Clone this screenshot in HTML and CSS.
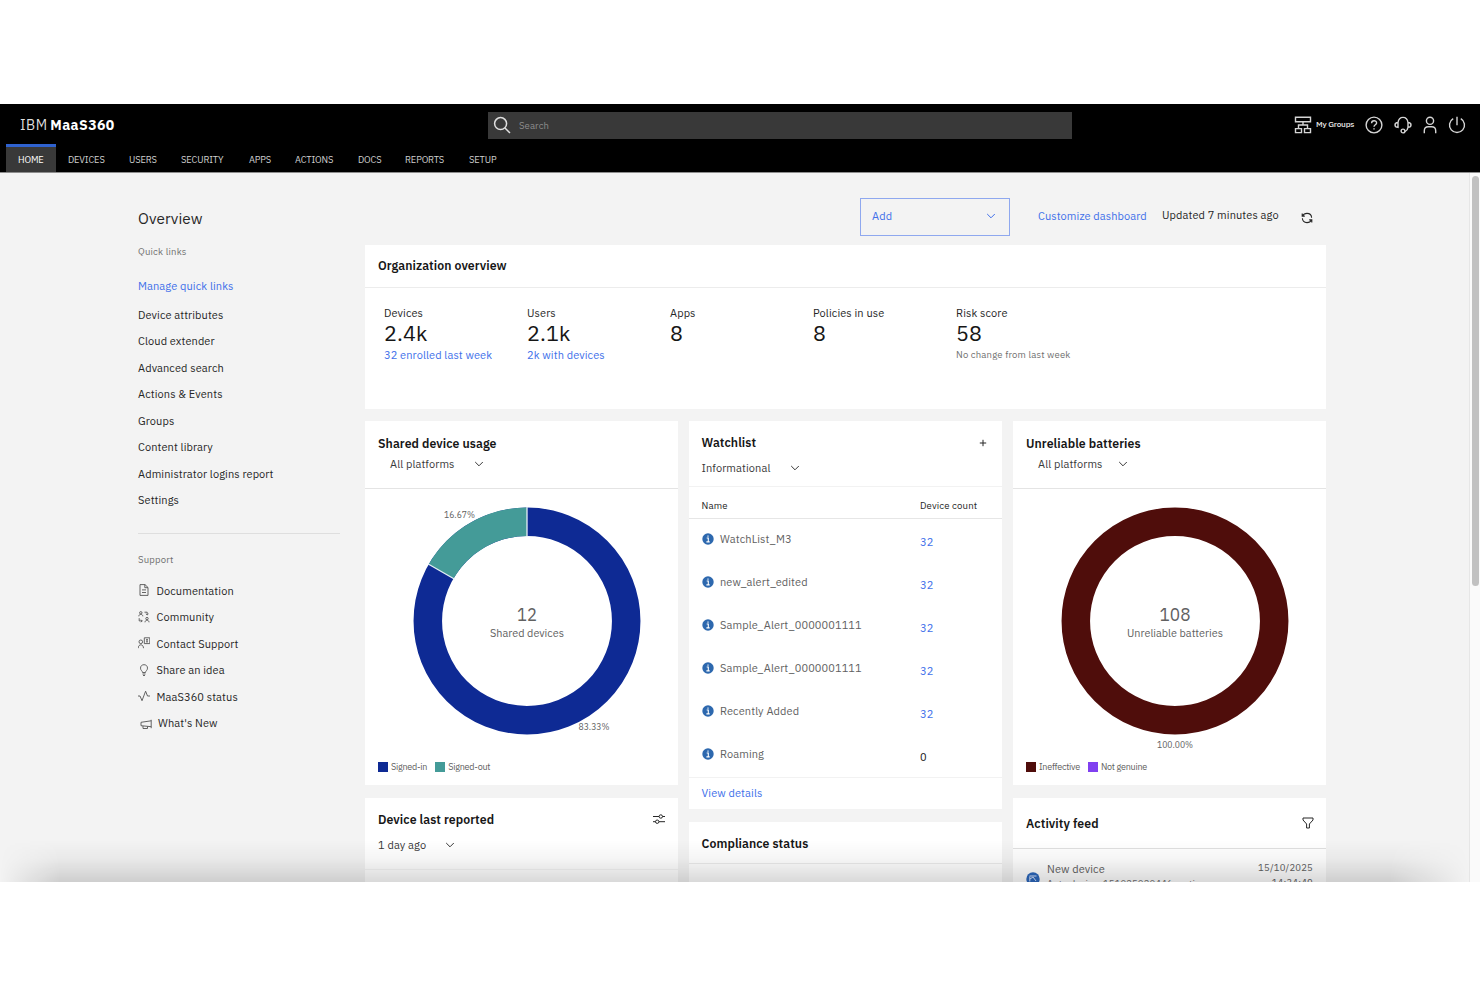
FILE: index.html
```html
<!DOCTYPE html>
<html lang="en">
<head>
<meta charset="utf-8">
<title>IBM MaaS360</title>
<link rel="stylesheet" href="styles.css">
</head>
<body>
<div class="app">
  <header class="header">
    <div class="topbar">
      <div class="brand">IBM <b>MaaS360</b></div>
      <div class="search">
        <svg class="search-icon" viewBox="0 0 18 18"><circle cx="7.6" cy="7.6" r="6"/><path d="M12 12l5 5"/></svg>
        <span>Search</span>
      </div>
      <div class="tools">
        <svg class="tool groups" viewBox="0 0 18 18"><path d="M1.500 1.200h15v4.600h-15zM1.500 12.600h6v4h-6zM10.500 12.600h6v4h-6zM9 5.800v3.200M4.500 12.600V9h9v3.600"/></svg>
        <span class="my-groups">My Groups</span>
        <svg class="tool help" viewBox="0 0 18 18"><circle cx="9" cy="9" r="7.900"/><path d="M6.600 7.200c0-3.400 5-3.200 5-.3 0 1.900-2.600 1.800-2.600 3.800"/><path d="M9 12.300v1.300"/></svg>
        <svg class="tool headset" viewBox="0 0 18 18"><path d="M4 6.500C4.500 3 6.500 1.400 9 1.400s4.500 1.600 5 5.100v4.800c-.3 2.200-1.500 3.600-3 4.200M4 6.500C2 6.600 1 7.500 1 9s1 2.300 3 2.400zM14 6.500c2 .1 3 1 3 2.500s-1 2.300-3 2.400"/><circle cx="9" cy="15" r="1.900"/></svg>
        <svg class="tool user" viewBox="0 0 18 18"><circle cx="9" cy="4.800" r="3.600"/><path d="M3.300 17.300v-2.500c0-2.600 1.600-4 4-4h3.400c2.400 0 4 1.400 4 4v2.500"/></svg>
        <svg class="tool power" viewBox="0 0 18 18"><path d="M9 .8v8.500M12.800 2.600a7.500 7.500 0 1 1-7.600 0"/></svg>
      </div>
    </div>
    <nav class="tabs">
      <a class="tab active">HOME</a><a class="tab">DEVICES</a><a class="tab">USERS</a><a class="tab">SECURITY</a><a class="tab">APPS</a><a class="tab">ACTIONS</a><a class="tab">DOCS</a><a class="tab">REPORTS</a><a class="tab">SETUP</a>
    </nav>
  </header>
  <div class="body">
    <aside class="sidebar">
      <h1 class="title">Overview</h1>
      <div class="section quick">Quick links</div>
      <a class="manage">Manage quick links</a>
      <ul class="links">
        <li>Device attributes</li><li>Cloud extender</li><li>Advanced search</li><li>Actions &amp; Events</li><li>Groups</li><li>Content library</li><li>Administrator logins report</li><li>Settings</li>
      </ul>
      <hr class="divider">
      <div class="section support">Support</div>
      <ul class="links icons">
        <li><svg viewBox="0 0 12 12"><path d="M2 .6h5L10 3.500v7.900H2zM6.800.6v3.100H10M4 5.900h4M4 8.500h4"/></svg>Documentation</li>
        <li><svg viewBox="0 0 12 12"><circle cx="2.800" cy="1.800" r="1.200"/><path d="M.8 5.300c0-2.600 4-2.600 4 0M6.500 1.200h2.700v2.500M8 2.800l1.200 1.200L10.500 2.800M1.200 7.200v2.700h3M3 8.700l1.200 1.200L3 11.200"/><circle cx="9" cy="7.600" r="1.200"/><path d="M7 11.300c0-2.700 4-2.700 4 0"/></svg>Community</li>
        <li><svg viewBox="0 0 12 12"><circle cx="2.800" cy="4.800" r="1.800"/><path d="M.2 11.200c0-4.500 5.300-4.500 5.300 0M6.300.8h5.500v5.800H6.300zM8 2.700h2M9 2.700v2M8 4.900h2"/></svg>Contact Support</li>
        <li><svg viewBox="0 0 12 12"><path d="M4.500 8.500c0-1.700-2-2-2-4.400C2.500 2 4 .7 6 .7s3.500 1.300 3.500 3.400c0 2.400-2 2.700-2 4.400zM4.500 10h3M5 11.500h2"/></svg>Share an idea</li>
        <li><svg viewBox="0 0 12 12"><path d="M0 6h2l2 4.700L7.600 1.200 9.500 6H12"/></svg>MaaS360 status</li>
        <li class="news"><svg viewBox="0 0 12 12"><path d="M11.200 1.800v8.400M11.200 2.800L1 4.300v3.400l10.200 1M3 8v2.500h4.500V8.500"/></svg>What's New</li>
      </ul>
    </aside>
    <main class="main">
      <div class="actions">
        <div class="add"><span>Add</span><svg class="chev" viewBox="0 0 10 10"><path d="M1.200 3l3.800 3.800L8.800 3"/></svg></div>
        <a class="customize">Customize dashboard</a>
        <span class="updated">Updated 7 minutes ago</span>
        <svg class="refresh" viewBox="0 0 12 12"><path d="M1.200 1.500v2.600h2.600M1.500 4C2.400 2.300 4 1.400 6 1.400c2.600 0 4.500 1.900 4.600 4.300M10.800 10.500V7.900H8.200M10.500 8C9.600 9.700 8 10.600 6 10.600 3.400 10.600 1.500 8.700 1.400 6.300"/></svg>
      </div>
      <section class="card org">
        <h2 class="org-head">Organization overview</h2>
        <div class="metrics">
          <div class="metric"><span>Devices</span><strong>2.4k</strong><a>32 enrolled last week</a></div>
          <div class="metric"><span>Users</span><strong>2.1k</strong><a>2k with devices</a></div>
          <div class="metric"><span>Apps</span><strong>8</strong></div>
          <div class="metric"><span>Policies in use</span><strong>8</strong></div>
          <div class="metric"><span>Risk score</span><strong>58</strong><small>No change from last week</small></div>
        </div>
      </section>
      <div class="columns">
        <div class="column">
          <section class="card chart-card">
            <div class="chart-head"><h2>Shared device usage</h2>
              <div class="select">All platforms<svg class="chev" viewBox="0 0 10 10"><path d="M1.200 3l3.800 3.800L8.800 3"/></svg></div></div>
            <svg class="donut" viewBox="0 0 313 260">
              <circle class="ring signed-in" cx="162" cy="132" r="99.200"/>
              <path class="ring signed-out" d="M76.100 82.400A99.200 99.200 0 0 1 162 32.800"/>
              <path class="split" d="M162 18v30M63.200 75l26.500 15.300"/>
              <text class="total" x="162" y="132.300" textLength="20" lengthAdjust="spacingAndGlyphs">12</text>
              <text class="total-label" x="162" y="148" textLength="74" lengthAdjust="spacingAndGlyphs">Shared devices</text>
              <text class="share" x="94.500" y="29.300" textLength="31" lengthAdjust="spacingAndGlyphs">16.67%</text>
              <text class="share" x="229" y="241.300" textLength="31" lengthAdjust="spacingAndGlyphs">83.33%</text>
            </svg>
            <div class="legend"><i class="signed-in"></i><span>Signed-in</span><i class="signed-out"></i><span>Signed-out</span></div>
          </section>
          <section class="card reported">
            <div class="row"><h2>Device last reported</h2>
              <svg class="sliders" viewBox="0 0 12 12"><path d="M0 3.500h6M9.500 3.500H12M0 8.700h2.500M6 8.700h6"/><circle cx="7.800" cy="3.500" r="1.700"/><circle cx="4.200" cy="8.700" r="1.700"/></svg></div>
            <div class="select">1 day ago<svg class="chev" viewBox="0 0 10 10"><path d="M1.200 3l3.800 3.800L8.800 3"/></svg></div>
            <hr>
          </section>
        </div>
        <div class="column">
          <section class="card watch">
            <div class="watch-head">
              <div class="row"><h2>Watchlist</h2><svg class="plus" viewBox="0 0 8 8"><path d="M4 .8v6.400M.8 4h6.400"/></svg></div>
              <div class="select">Informational<svg class="chev" viewBox="0 0 10 10"><path d="M1.200 3l3.800 3.800L8.800 3"/></svg></div>
            </div>
            <div class="watch-cols"><span>Name</span><span>Device count</span></div>
            <div class="watch-rows">
              <div class="watch-row"><svg viewBox="0 0 12 12"><circle cx="6" cy="6" r="5.700"/><path d="M4.700 5h1.600v3.700M4.400 8.900h3.300M6 2.500v1.300"/></svg><span>WatchList_M3</span><a>32</a></div>
              <div class="watch-row"><svg viewBox="0 0 12 12"><circle cx="6" cy="6" r="5.700"/><path d="M4.700 5h1.600v3.700M4.400 8.900h3.300M6 2.500v1.300"/></svg><span>new_alert_edited</span><a>32</a></div>
              <div class="watch-row"><svg viewBox="0 0 12 12"><circle cx="6" cy="6" r="5.700"/><path d="M4.700 5h1.600v3.700M4.400 8.900h3.300M6 2.500v1.300"/></svg><span>Sample_Alert_0000001111</span><a>32</a></div>
              <div class="watch-row"><svg viewBox="0 0 12 12"><circle cx="6" cy="6" r="5.700"/><path d="M4.700 5h1.600v3.700M4.400 8.900h3.300M6 2.500v1.300"/></svg><span>Sample_Alert_0000001111</span><a>32</a></div>
              <div class="watch-row"><svg viewBox="0 0 12 12"><circle cx="6" cy="6" r="5.700"/><path d="M4.700 5h1.600v3.700M4.400 8.900h3.300M6 2.500v1.300"/></svg><span>Recently Added</span><a>32</a></div>
              <div class="watch-row"><svg viewBox="0 0 12 12"><circle cx="6" cy="6" r="5.700"/><path d="M4.700 5h1.600v3.700M4.400 8.900h3.300M6 2.500v1.300"/></svg><span>Roaming</span><b>0</b></div>
            </div>
            <a class="view">View details</a>
          </section>
          <section class="card compliance"><h2>Compliance status</h2><hr></section>
        </div>
        <div class="column">
          <section class="card chart-card batteries">
            <div class="chart-head"><h2>Unreliable batteries</h2>
              <div class="select">All platforms<svg class="chev" viewBox="0 0 10 10"><path d="M1.200 3l3.800 3.800L8.800 3"/></svg></div></div>
            <svg class="donut" viewBox="0 0 313 260">
              <circle class="ring ineffective" cx="162" cy="132" r="99.200"/>
              <text class="total" x="162" y="132.300" textLength="31" lengthAdjust="spacingAndGlyphs">108</text>
              <text class="total-label" x="162" y="148" textLength="96" lengthAdjust="spacingAndGlyphs">Unreliable batteries</text>
              <text class="share" x="162" y="258.800" textLength="36" lengthAdjust="spacingAndGlyphs">100.00%</text>
            </svg>
            <div class="legend"><i class="ineffective"></i><span>Ineffective</span><i class="not-genuine"></i><span>Not genuine</span></div>
          </section>
          <section class="card feed">
            <div class="feed-head"><h2>Activity feed</h2><svg class="filter" viewBox="0 0 12 12"><path d="M1 1h10v2L7.400 7v4H4.600V7L1 3z"/></svg></div>
            <div class="feed-item">
              <svg class="feed-icon" viewBox="0 0 14 14"><circle cx="7" cy="7" r="6.700"/><path d="M3.500 4h7M4 7l3-2 3 4M3.800 4.500v5"/></svg>
              <div class="feed-text"><span>New device</span><small>Auto device_151025020446_notice</small></div>
              <div class="feed-time"><span>15/10/2025</span><span>14:34:49</span></div>
            </div>
          </section>
        </div>
      </div>
    </main>
    <div class="scrollbar"><div class="thumb"></div></div>
  </div>
  <div class="shade"></div>
</div>
</body>
</html>
```
FILE: styles.css
```css
* { box-sizing: border-box; }
body { margin: 0; padding-top: 104px; height: 987px; background: #fff; overflow: hidden; font-family: "IBM Plex Sans", "Noto Sans", sans-serif; font-size: 11px; letter-spacing: .1px; color: #262626; }
h1, h2, ul { margin: 0; padding: 0; }
ul { list-style: none; }
hr { margin: 0; border: 0; height: 1px; background: #ececec; }
svg { fill: none; stroke: currentColor; display: block; flex: none; }
a { color: #4170ea; }
h2 { font-size: 12.300px; font-weight: 600; line-height: 16px; letter-spacing: .07px; color: #161616; white-space: nowrap; }

.app { position: relative; height: 778px; overflow: hidden; background: #f3f3f3; }
.header { height: 69px; background: #000; border-bottom: 1px solid #8d8d8d; color: #e8e8e8; }
.topbar { height: 40px; display: flex; align-items: center; padding: 2px 14px 0 20px; }
.brand { width: 468px; font-size: 14px; color: #ddd; letter-spacing: .45px; word-spacing: -1px; }
.brand b { color: #fff; font-weight: 700; }
.search { width: 584px; height: 27px; background: #393939; display: flex; align-items: center; padding-left: 5px; gap: 8px; font-size: 9.500px; color: #8d8d8d; }
.search-icon { width: 18px; height: 18px; stroke: #e0e0e0; stroke-width: 1.500; }
.tools { flex: 1; display: flex; align-items: center; justify-content: flex-end; }
.tool { width: 18px; height: 18px; stroke: #d5d5d5; stroke-width: 1.400; }
.my-groups { width: 38px; margin: 0 11px 2px 4px; font-size: 8.200px; font-weight: 500; letter-spacing: -.2px; white-space: nowrap; }
.headset { margin-left: 11px; }
.user { margin-left: 9px; }
.power { margin-left: 9px; }
.tabs { display: grid; grid-template-columns: 50px 61px 52px 68px 46px 63px 47px 64px 60px; height: 28px; padding-left: 6px; }
.tab { height: 28px; color: #d0d0d0; font-size: 9.300px; line-height: 32px; padding-left: 12px; letter-spacing: -.12px; }
.tab.active { color: #fff; background: #393939; border-top: 3px solid #2f62cf; line-height: 26px; }

.body { display: flex; height: 709px; }
.sidebar { width: 340px; padding: 34px 0 0 138px; }
.title { font-size: 15.300px; font-weight: 400; line-height: 22px; color: #262626; }
.section { font-size: 9.500px; line-height: 14px; letter-spacing: .2px; color: #6f6f6f; }
.quick { margin-top: 16px; }
.manage { display: block; margin-top: 19px; line-height: 16px; }
.links { margin-top: 7.800px; }
.links li { height: 26.500px; line-height: 26.500px; display: flex; align-items: center; white-space: nowrap; }
.divider { margin-top: 19px; background: #dedede; }
.support { margin-top: 19px; }
.icons { margin-top: 11px; }
.icons svg { width: 12px; height: 12px; margin-right: 6.500px; stroke: #525252; stroke-width: .9; position: relative; top: -1px; }
.icons .news svg { margin: 0 6.500px 0 1.500px; top: 0; }

.main { width: 960.500px; margin-left: 25px; padding-top: 25px; }
.actions { height: 47px; display: flex; align-items: flex-start; }
.add { margin-left: 495px; width: 150px; height: 38px; border: 1px solid #8fa8ef; display: flex; align-items: center; justify-content: space-between; padding: 0 13px 2px 11px; color: #4170ea; }
.chev { width: 10px; height: 10px; stroke-width: 1; }
.customize { margin-left: 28px; width: 124px; line-height: 36px; white-space: nowrap; }
.updated { width: 138.500px; line-height: 35px; white-space: nowrap; }
.refresh { width: 12px; height: 12px; margin-top: 14px; stroke-width: 1.100; }

.card { background: #fff; overflow: hidden; }
.org { height: 164px; }
.org-head { height: 43px; line-height: 41px; padding-left: 13px; border-bottom: 1px solid #ececec; }
.metrics { display: grid; grid-template-columns: repeat(5, 143px); padding: 17px 0 0 19px; }
.metric { display: flex; flex-direction: column; line-height: 16px; white-space: nowrap; }
.metric strong { font-size: 21.500px; font-weight: 400; line-height: 25.500px; color: #161616; }
.metric small { font-size: 9.500px; line-height: 15px; letter-spacing: .18px; color: #6f6f6f; }
.columns { display: grid; grid-template-columns: repeat(3, 1fr); column-gap: 11.500px; margin-top: 12px; }
.column { display: flex; flex-direction: column; gap: 13px; min-width: 0; }
.row { display: flex; align-items: center; justify-content: space-between; }
.select { display: flex; align-items: center; line-height: 16px; color: #393939; white-space: nowrap; }

.chart-card { height: 364px; }
.chart-head { height: 68px; border-bottom: 1px solid #e4e4e4; padding: 13.500px 0 0 13px; }
.chart-head .select { padding: 5px 0 0 12px; }
.select .chev { margin-left: 19px; }
.batteries .select .chev { margin-left: 15px; }
.donut { width: 313px; height: 260px; overflow: visible; }
.ring { stroke-width: 28.500; }
.ring.signed-in { stroke: #0e2a94; }
.ring.signed-out { stroke: #449b98; }
.ring.ineffective { stroke: #4f0d0b; }
.split { stroke: #e5f0f5; stroke-width: 1.300; }
.donut text { stroke: none; fill: #616161; text-anchor: middle; letter-spacing: 0; }
.donut .total { font-size: 19px; }
.donut .total-label { font-size: 11.500px; }
.donut .share { font-size: 9.500px; }
.legend { display: flex; align-items: center; margin: 11px 0 0 13px; font-size: 9px; line-height: 14px; letter-spacing: -.25px; color: #616161; }
.legend i { width: 10px; height: 10px; margin-right: 3px; }
.legend span { margin-right: 8px; }
i.signed-in { background: #0e2a94; }
i.signed-out { background: #449b98; }
i.ineffective { background: #4f0d0b; }
i.not-genuine { background: #8040f0; }

.reported { height: 100px; padding-top: 13px; }
.reported .row { padding: 0 13px 0 13px; }
.reported .select { margin: 10px 0 16px 13px; }
.reported hr { background: #f4f4f4; }
.sliders { width: 12px; height: 12px; }

.watch { height: 388px; }
.watch-head { height: 66px; padding: 13px 15px 0 12.500px; border-bottom: 1px solid #f2f2f2; }
.watch-head .select { margin-top: 10px; }
.plus { width: 8px; height: 8px; margin-top: 1px; }
.watch-cols { display: grid; grid-template-columns: 218.500px 1fr; padding-left: 12.500px; height: 32px; line-height: 38px; border-bottom: 1px solid #e6e6e6; font-size: 9.600px; letter-spacing: .15px; }
.watch-rows { padding-left: 12.500px; height: 259px; border-bottom: 1px solid #f2f2f2; }
.watch-row { display: grid; grid-template-columns: 18.500px 200px 1fr; height: 43px; padding-top: 12px; line-height: 16px; color: #616161; }
.watch-row svg { width: 12px; height: 12px; margin-top: 2px; fill: #2d68ae; stroke: none; }
.watch-row svg path { stroke: #fff; stroke-width: 1.100; }
.watch-row a, .watch-row b { padding-top: 2.500px; font-weight: 400; }
.watch-row b { color: #161616; }
.view { display: block; padding: 7px 0 0 12.500px; line-height: 16px; }
.compliance { height: 70px; padding-top: 13px; }
.compliance h2 { padding: 0 0 12px 12.500px; }

.feed { height: 100px; }
.feed-head { height: 51px; padding: 0 12px 0 13px; border-bottom: 1px solid #e0e0e0; display: flex; align-items: center; justify-content: space-between; }
.filter { width: 12px; height: 12px; }
.feed-item { display: flex; padding: 12px 12.500px 0 13px; color: #616161; }
.feed-icon { width: 14px; height: 14px; margin: 11px 7px 0 0; fill: #2d68bd; stroke: none; }
.feed-icon path { stroke: #d5e4ff; }
.feed-text { flex: 1; display: flex; flex-direction: column; line-height: 16px; }
.feed-text small { font-size: 9.500px; line-height: 14px; color: #6f6f6f; }
.feed-time { display: flex; flex-direction: column; align-items: flex-end; font-size: 9.500px; line-height: 15px; letter-spacing: .2px; margin-top: -1px; }

.scrollbar { width: 11px; margin-left: auto; background: #fafafa; border-left: 1px solid #e6e6e6; padding: 3px 1px 0 2px; }
.thumb { height: 410px; border-radius: 4px; background: #c1c1c1; }
/* Soft shadow rising from the bottom edge of the window */
.shade { position: absolute; left: 0; right: 0; bottom: 0; height: 42px; background: linear-gradient(to bottom, rgba(0,0,0,0), rgba(0,0,0,.04) 45%, rgba(0,0,0,.15)); -webkit-mask-image: linear-gradient(to right, transparent 0, #000 60px, #000 1390px, transparent 1470px); mask-image: linear-gradient(to right, transparent 0, #000 60px, #000 1390px, transparent 1470px); }
```
